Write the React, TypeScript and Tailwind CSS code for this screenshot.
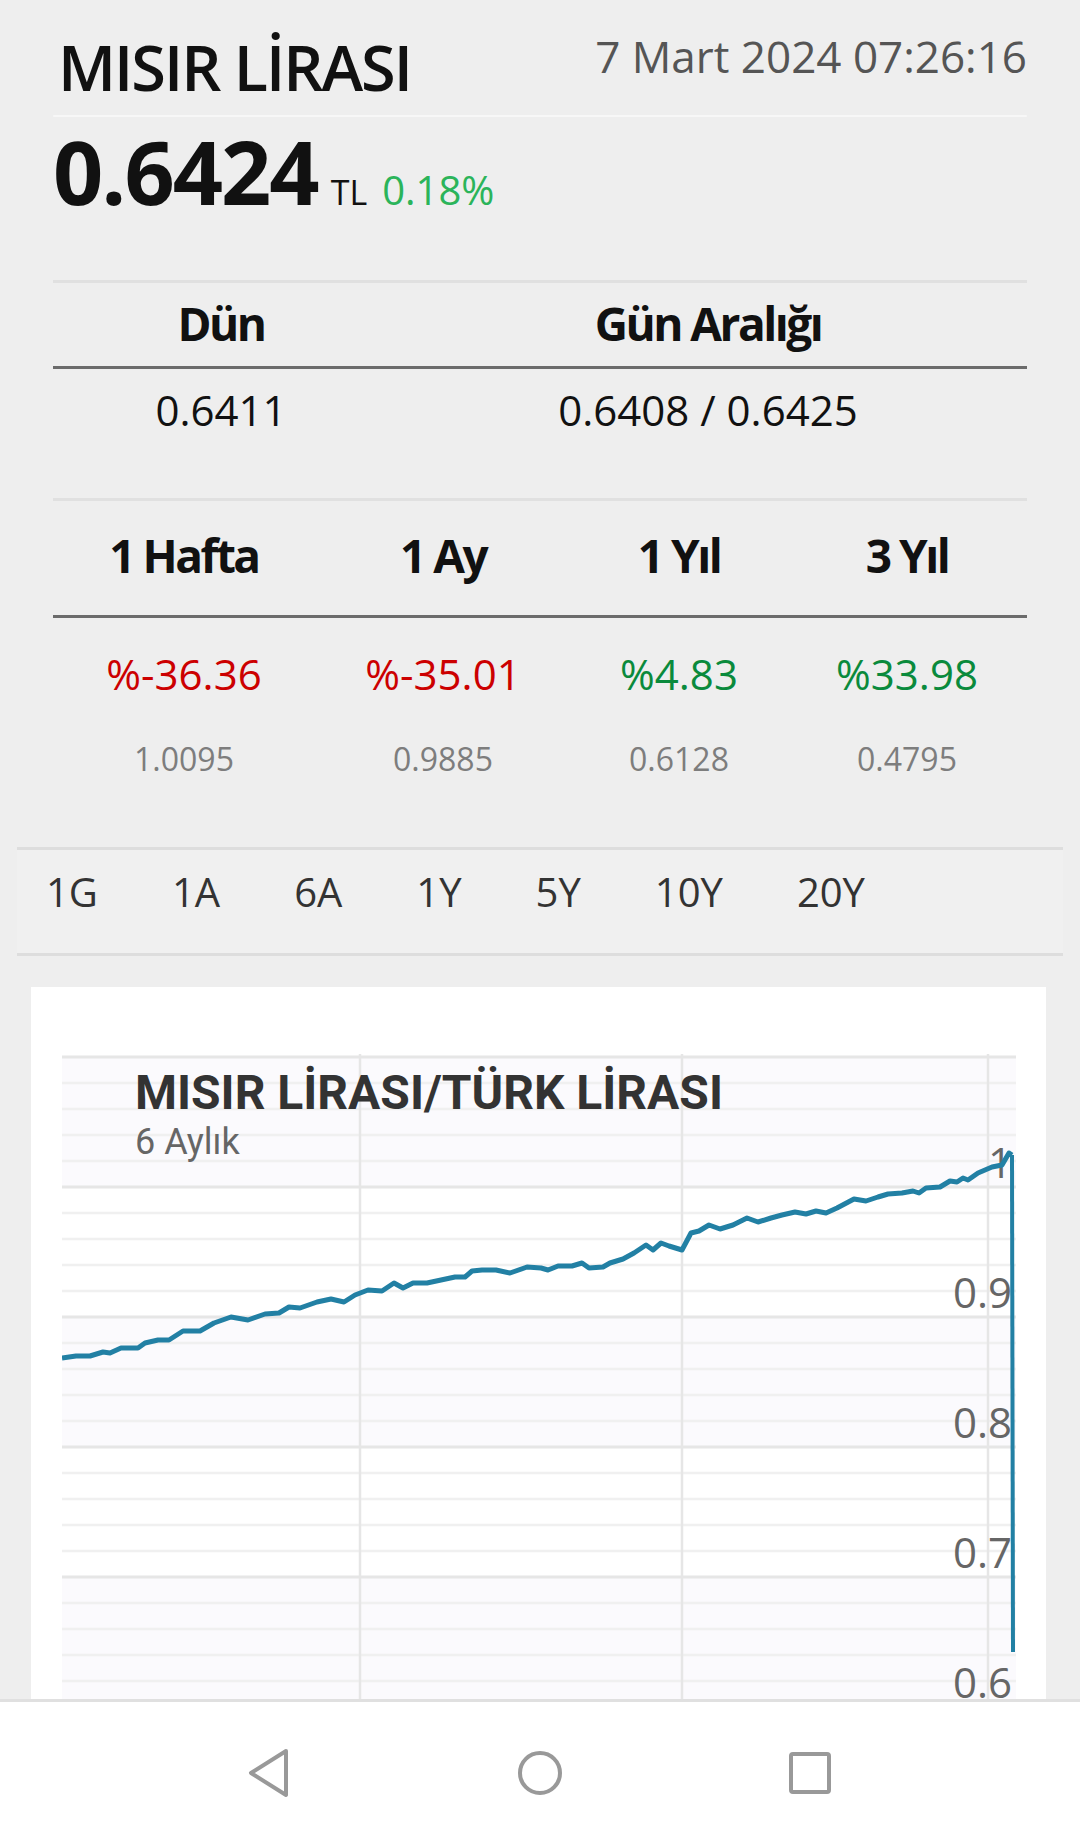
import React from 'react';

const pts: [number, number][] = [
  [62, 1358], [76, 1356], [90, 1356], [103, 1352], [110, 1353], [121, 1348], [138, 1348], [145, 1343],
  [158, 1340], [169, 1340], [183, 1331], [200, 1331], [214, 1323], [231, 1317], [248, 1320], [265, 1314],
  [279, 1313], [289, 1307], [300, 1308], [317, 1302], [331, 1299], [344, 1302], [355, 1295], [368, 1290],
  [382, 1291], [394, 1283], [403, 1288], [413, 1283], [427, 1283], [441, 1280], [455, 1277], [465, 1277],
  [472, 1271], [482, 1270], [496, 1270], [510, 1273], [527, 1267], [541, 1268], [548, 1270], [558, 1266],
  [572, 1266], [582, 1263], [589, 1268], [603, 1267], [610, 1263], [623, 1259], [634, 1253], [646, 1245],
  [653, 1250], [661, 1243], [669, 1246], [682, 1250], [691, 1233], [699, 1231], [709, 1225], [720, 1229],
  [733, 1225], [747, 1218], [758, 1222], [771, 1218], [782, 1215], [795, 1212], [806, 1214], [816, 1211],
  [826, 1213], [837, 1208], [854, 1199], [866, 1201], [878, 1197], [888, 1194], [902, 1193], [913, 1191],
  [919, 1193], [926, 1188], [940, 1187], [950, 1181], [957, 1182], [963, 1178], [968, 1180], [978, 1173],
  [992, 1167], [1002, 1165], [1009, 1153], [1012, 1155], [1013, 1652],
];

// value -> y in page coords (1.0 sits at 1187, 0.1 per 130px)
const yOf = (v: number) => 1187 + (1 - v) * 1300;

const periods = [
  { label: '1 Hafta', pct: '%-36.36', base: '1.0095', up: false },
  { label: '1 Ay', pct: '%-35.01', base: '0.9885', up: false },
  { label: '1 Yıl', pct: '%4.83', base: '0.6128', up: true },
  { label: '3 Yıl', pct: '%33.98', base: '0.4795', up: true },
];

const ranges = ['1G', '1A', '6A', '1Y', '5Y', '10Y', '20Y'];

const Chart: React.FC = () => {
  const lines: { y: number; major: boolean }[] = [];
  for (let i = 0; i <= 26; i++) {
    const v = 1.1 - i * 0.02;
    lines.push({ y: yOf(v), major: i % 5 === 0 });
  }
  const bands = [1.1, 0.9, 0.7];
  const labels = ['1', '0.9', '0.8', '0.7', '0.6'];

  return (
    <svg
      className="absolute inset-0"
      width="954"
      height="700"
      viewBox="62 1054 954 700"
    >
      {bands.map((b) => (
        <rect key={b} x="62" y={yOf(b)} width="954" height="130" fill="#fbfafd" />
      ))}
      {lines.map((l, i) => (
        <line
          key={i}
          x1="62"
          x2="1016"
          y1={l.y}
          y2={l.y}
          stroke={l.major ? '#e6e6e6' : '#f0f0f0'}
          strokeWidth={l.major ? 3 : 2.5}
        />
      ))}
      {[360, 682, 988].map((x) => (
        <line key={x} x1={x} x2={x} y1="1054" y2="1754" stroke="#e6e6e6" strokeWidth="2.5" />
      ))}
      {labels.map((t, i) => (
        <text
          key={t}
          x="1012"
          y={1178 + i * 130}
          textAnchor="end"
          fill="#666"
          fontSize="42"
          fontFamily="'Open Sans', sans-serif"
        >
          {t}
        </text>
      ))}
      <polyline
        points={pts.slice(0, -1).map((p) => p.join(',')).join(' ')}
        fill="none"
        stroke="#2280a4"
        strokeWidth="5"
        strokeLinejoin="round"
      />
      <polyline
        points={pts.slice(-2).map((p) => p.join(',')).join(' ')}
        fill="none"
        stroke="#2280a4"
        strokeWidth="4"
      />
    </svg>
  );
};

const App: React.FC = () => {
  return (
    <div className="h-[1843px] flex flex-col bg-[#eeeeee] font-['Open_Sans',sans-serif] overflow-hidden">
      <div className="h-[1699px] overflow-hidden">
        <div className="px-[53px]">
          {/* Header */}
          <div className="flex justify-between items-start pt-[35px]">
            <h1 className="ml-[5px] text-[63px] leading-none font-semibold tracking-[-2px] text-[#111]">
              MISIR LİRASI
            </h1>
            <div className="mt-[-1px] text-[44px] leading-none text-[#555]">7 Mart 2024 07:26:16</div>
          </div>
          <div className="mt-[17px] h-[2px] bg-[#f7f7f7] rounded-full"></div>

          <div className="mt-[10px] flex items-baseline">
            <span className="text-[88px] leading-none font-bold tracking-[-2px] text-[#111]">0.6424</span>
            <span className="ml-[13px] text-[34px] leading-none text-[#111]">TL</span>
            <span className="ml-[15px] text-[40px] leading-none text-[#2bb45a]">0.18%</span>
          </div>

          {/* Dün / Gün Aralığı */}
          <div className="mt-[65px] border-t-[3px] border-[#e0e0e0]">
            <div className="grid grid-cols-[336px_1fr] pt-[17px] pb-[20px] border-b-[3px] border-[#6b6b6b] text-[46px] leading-none font-bold tracking-[-2.5px] text-[#111] text-center">
              <div>Dün</div>
              <div>Gün Aralığı</div>
            </div>
            <div className="grid grid-cols-[336px_1fr] pt-[20px] text-[42px] leading-none text-[#111] text-center">
              <div>0.6411</div>
              <div>0.6408 / 0.6425</div>
            </div>
          </div>

          {/* Periods */}
          <div className="mt-[67px] border-t-[3px] border-[#e0e0e0]">
            <div className="grid grid-cols-[262px_256px_216px_1fr] pt-[31px] pb-[37px] border-b-[3px] border-[#6b6b6b] text-[46px] leading-none font-bold tracking-[-2.5px] text-[#111] text-center">
              {periods.map((p) => (
                <div key={p.label}>{p.label}</div>
              ))}
            </div>
            <div className="grid grid-cols-[262px_256px_216px_1fr] pt-[35px] text-[42px] leading-none text-center">
              {periods.map((p) => (
                <div key={p.label} className={p.up ? 'text-[#0a8a3c]' : 'text-[#cc0000]'}>
                  {p.pct}
                </div>
              ))}
            </div>
            <div className="grid grid-cols-[262px_256px_216px_1fr] mt-[48px] text-[32px] leading-none text-[#7d7d7d] text-center">
              {periods.map((p) => (
                <div key={p.label}>{p.base}</div>
              ))}
            </div>
          </div>
        </div>

        {/* Range tabs */}
        <div className="mx-[17px] mt-[72px] bg-[#f0f0f0] border-y-[3px] border-[#dddddd] pt-[22px] pb-[41px] pl-[29px] flex gap-[74px] text-[40px] leading-none text-[#333]">
          {ranges.map((r) => (
            <span key={r}>{r}</span>
          ))}
        </div>

        {/* Chart card */}
        <div className="ml-[31px] mr-[34px] mt-[31px] bg-white pt-[67px] pl-[31px] pr-[30px]">
          <div className="relative h-[700px] overflow-hidden">
            <Chart />
            <div className="relative pl-[73px] pt-[15px]">
              <div className="font-['Roboto',sans-serif] text-[48px] leading-none font-bold text-[#333]">
                MISIR LİRASI/TÜRK LİRASI
              </div>
              <div className="mt-[7px] font-['Roboto',sans-serif] text-[36px] leading-none text-[#666]">
                6 Aylık
              </div>
            </div>
          </div>
        </div>
      </div>

      {/* Android nav bar */}
      <div className="h-[144px] bg-white border-t-[3px] border-[#e0e0e0] grid grid-cols-[270px_270px_270px] justify-center items-center">
        <div className="flex justify-center">
          <svg width="46" height="52" viewBox="0 0 46 52">
            <path d="M39 4 L4 26 L39 48 Z" fill="none" stroke="#999" strokeWidth="4" strokeLinejoin="round" />
          </svg>
        </div>
        <div className="flex justify-center">
          <svg width="48" height="48" viewBox="0 0 48 48">
            <circle cx="24" cy="24" r="20" fill="none" stroke="#999" strokeWidth="4" />
          </svg>
        </div>
        <div className="flex justify-center">
          <svg width="44" height="44" viewBox="0 0 44 44">
            <rect x="3" y="3" width="38" height="38" rx="2" fill="none" stroke="#999" strokeWidth="4" />
          </svg>
        </div>
      </div>
    </div>
  );
};

export default App;
